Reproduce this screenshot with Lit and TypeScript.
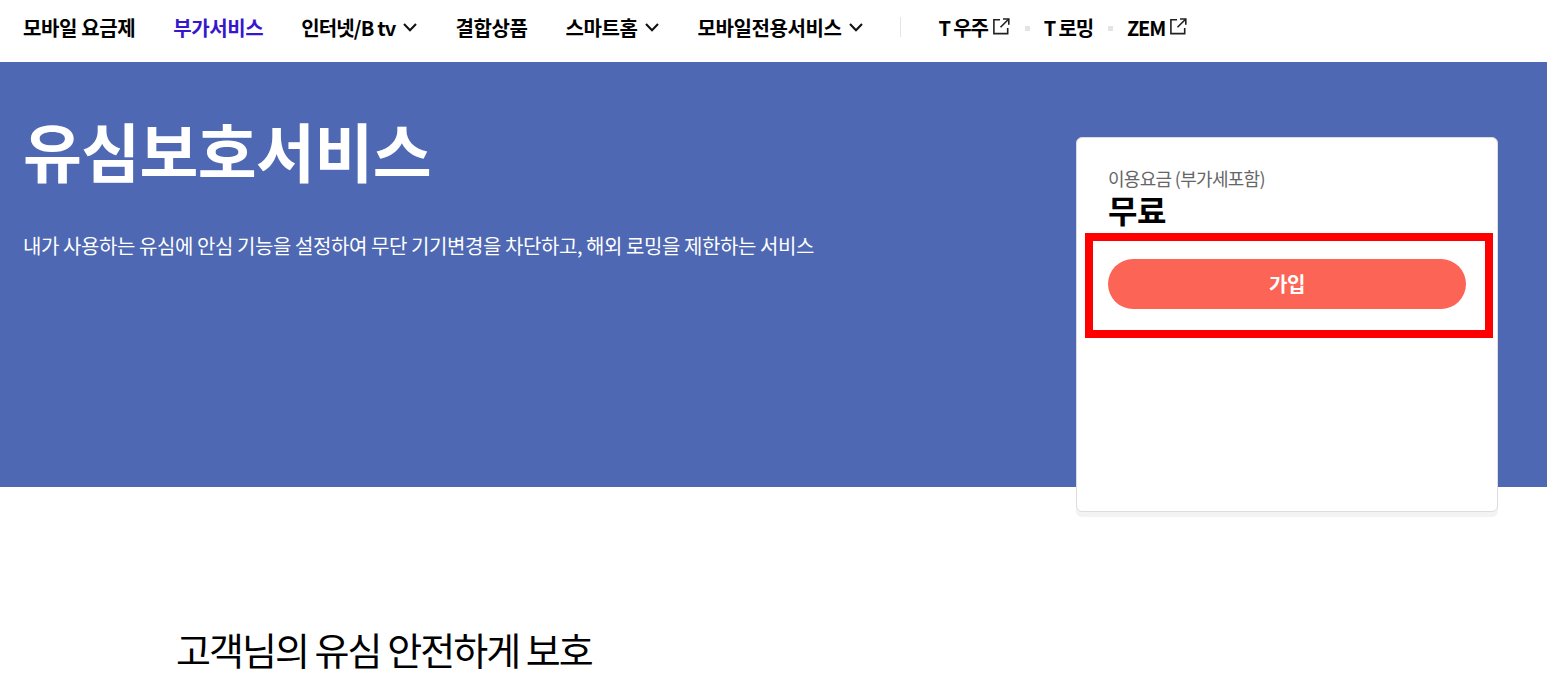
import { LitElement, html, css, svg } from "lit";
import { customElement } from "lit/decorators.js";

const chevron = svg`<svg class="chev" width="14" height="9" viewBox="0 0 14 9" fill="none"><path d="M1 1 L7 7.2 L13 1" stroke="#111" stroke-width="2.1"/></svg>`;
const ext = svg`<svg class="ext" width="17" height="17" viewBox="0 0 17 17" fill="none" stroke="#222" stroke-width="1.6"><path d="M7 1.8 H0.9 V15.6 H14.7 V10"/><path d="M10 1 H15.8 V6.8"/><path d="M15.8 1 L7.5 9.3"/></svg>`;

@customElement("app-root")
export class AppRoot extends LitElement {
  static styles = css`
    :host { display: block; width: 1547px; height: 696px; overflow: hidden; background: #fff;
      font-family: "Noto Sans CJK KR", "Noto Sans", sans-serif; color: #000; }
    .nav { display: flex; align-items: center; height: 62px; padding: 0 0 8px 23px; font-size: 20px; font-weight: 700; letter-spacing: -0.4px; white-space: nowrap; box-sizing: border-box; }
    .nav a { display: flex; align-items: center; }
    .chev { margin-left: 8px; margin-top: 1px; }
    .ext { margin-left: 5px; margin-top: -2px; }
    .active { color: #3617ce; }
    .tight { letter-spacing: -0.85px; }
    .tighter { letter-spacing: -1.15px; }
    .sep { width: 1px; height: 20px; background: #e4e4e4; margin: 0 37px 0 37px; }
    .dot { width: 5px; height: 5px; background: #e4e4e4; margin: 2px 14px 0 15px; }
    .m1 { margin-right: 38px; }
    .hero { display: flex; justify-content: space-between; align-items: flex-start; height: 425px; background: #4e68b3; padding: 0 49px 0 23px; box-sizing: border-box; color: #fff; }
    h1 { margin: 45px 0 0; font-size: 64px; line-height: 84px; font-weight: 700; letter-spacing: -0.6px; }
    .desc { margin: 41px 0 0; font-size: 20px; line-height: 28px; letter-spacing: -0.42px; font-weight: 400; }
    .card { width: 422px; height: 375px; margin-top: 75px; box-sizing: border-box; background: #fff; border: 1px solid #ddd; border-radius: 6px; box-shadow: 0 5px 0 #f3f3f3; color: #000; padding: 28px 4px 0 8px; flex: none; }
    .label { margin-left: 23px; font-size: 18px; line-height: 24px; color: #666; letter-spacing: -0.7px; }
    .price { margin: 1px 0 0 23px; font-size: 32px; line-height: 36px; font-weight: 700; letter-spacing: -0.4px; height: 42px; }
    .mark { border: 8px solid #f00; padding: 18px 19px 21px 15px; height: 105px; box-sizing: border-box; }
    .btn { height: 50px; padding-bottom: 2px; box-sizing: border-box; border-radius: 25px; background: #fc6455; color: #fff; font-size: 20px; font-weight: 700; display: flex; align-items: center; justify-content: center; letter-spacing: -0.4px; }
    h2 { margin: 134px 0 0 176px; font-size: 38px; line-height: 56px; font-weight: 400; letter-spacing: -1.95px; }
  `;

  render() {
    return html`
      <nav class="nav">
        <a class="m1">모바일 요금제</a>
        <a class="m1 active">부가서비스</a>
        <a class="m1 tight">인터넷/B tv ${chevron}</a>
        <a class="m1">결합상품</a>
        <a class="m1">스마트홈 ${chevron}</a>
        <a>모바일전용서비스 ${chevron}</a>
        <span class="sep"></span>
        <a class="tighter">T 우주 ${ext}</a><span class="dot"></span>
        <a class="tighter">T 로밍</a><span class="dot"></span>
        <a class="tighter">ZEM ${ext}</a>
      </nav>
      <section class="hero">
        <div>
          <h1>유심보호서비스</h1>
          <p class="desc">내가 사용하는 유심에 안심 기능을 설정하여 무단 기기변경을 차단하고, 해외 로밍을 제한하는 서비스</p>
        </div>
        <aside class="card">
          <div class="label">이용요금 (부가세포함)</div>
          <div class="price">무료</div>
          <div class="mark"><div class="btn">가입</div></div>
        </aside>
      </section>
      <h2>고객님의 유심 안전하게 보호</h2>
    `;
  }
}
